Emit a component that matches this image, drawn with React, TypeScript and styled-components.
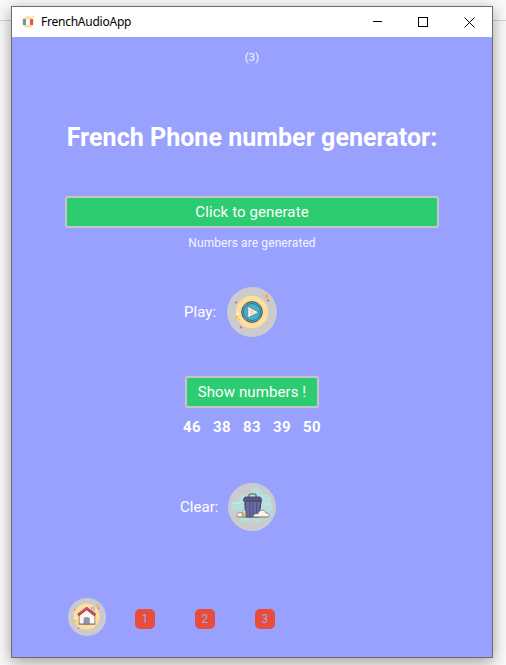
import React from 'react';
import styled, { createGlobalStyle } from 'styled-components';

const GlobalStyle = createGlobalStyle`
  * { box-sizing: border-box; }
  html, body { margin: 0; overflow: hidden; }
  button { margin: 0; padding: 0; font: inherit; color: inherit; border: 0; background: none; }
`;

const Desktop = styled.div`
  width: 506px;
  height: 665px;
  padding: 6px 0 0 11px;
  overflow: hidden;
  background: linear-gradient(#fafafa 0 20px, #d3d3d3 20px 21px, #fafafa 21px);
  font-family: Roboto, sans-serif;
`;

const AppWindow = styled.main`
  width: 482px;
  height: 652px;
  display: flex;
  flex-direction: column;
  border: 1px solid #6c6c70;
  background: #99a1ff;
  box-shadow: 0 4px 15px rgba(0, 0, 0, 0.38);
`;

const TitleBar = styled.header`
  height: 30px;
  flex: none;
  display: flex;
  align-items: center;
  background: #fff;
  color: #000;
`;

const AppIcon = styled.svg`
  width: 16px;
  height: 16px;
  margin-left: 8px;
`;

const AppName = styled.span`
  flex: 1;
  margin-left: 5px;
  font: 12px/16px "Noto Sans", sans-serif;
  letter-spacing: -0.24px;
`;

const WindowButton = styled.button`
  width: 46px;
  height: 30px;
  display: grid;
  place-items: center;
`;

const Content = styled.section`
  flex: 1;
  display: flex;
  flex-direction: column;
  align-items: center;
  color: #fff;
`;

const Caption = styled.div<{ $size: number; $top: number; $spacing?: number }>`
  height: 16px;
  margin-top: ${p => p.$top}px;
  font-size: ${p => p.$size}px;
  line-height: 16px;
  letter-spacing: ${p => p.$spacing ?? 0}px;
  color: #f4f5ff;
  white-space: nowrap;
`;

const Heading = styled.h1`
  height: 32px;
  margin: 56px 0 0;
  font-size: 25px;
  line-height: 32px;
  font-weight: 700;
  letter-spacing: 0.04px;
  white-space: nowrap;
`;

const ActionButton = styled.button<{ $width: number; $top: number }>`
  width: ${p => p.$width}px;
  height: 32px;
  margin-top: ${p => p.$top}px;
  border: 2px solid #c3c6c7;
  border-radius: 3px;
  background: #2ecc71;
  font-size: 15px;
  line-height: 28px;
  letter-spacing: 0.1px;
  white-space: nowrap;
`;

const ControlRow = styled.div<{ $top: number; $label: number; $shift: number; $size: number }>`
  height: ${p => p.$size}px;
  margin-top: ${p => p.$top}px;
  margin-left: ${p => p.$shift}px;
  display: grid;
  grid-template-columns: ${p => p.$label}px ${p => p.$size}px;
  align-items: center;
  font-size: 15px;
  letter-spacing: 0.05px;
`;

const RoundButton = styled.button<{ $size: number }>`
  width: ${p => p.$size}px;
  height: ${p => p.$size}px;
  border-radius: 50%;
  background: #cbcbcd;
  svg { display: block; width: 100%; height: 100%; }
`;

const Numbers = styled.div`
  width: 138px;
  height: 20px;
  margin-top: 9px;
  display: flex;
  justify-content: space-between;
  font-size: 15px;
  line-height: 20px;
  font-weight: 700;
  letter-spacing: 0.4px;
`;

const Footer = styled.nav`
  align-self: stretch;
  height: 38px;
  margin-top: 67px;
  padding-left: 56.4px;
  display: flex;
  align-items: center;
`;

const Pages = styled.div`
  display: flex;
  gap: 40px;
  margin: 4px 0 0 29.3px;
`;

const PageButton = styled.button`
  width: 20px;
  height: 20px;
  border-radius: 5px;
  background: #e74c3c;
  color: #b2a2df;
  font-size: 12px;
  line-height: 20px;
`;

const Confetti = () => (
  <>
    <circle cx="39.5" cy="9.5" r="1.8" fill="#f4b82b" />
    <circle cx="36.5" cy="8.5" r=".5" fill="#f4b82b" />
    <circle cx="9.5" cy="30.5" r="1.7" fill="#f6c447" />
    <circle cx="12.5" cy="32.5" r=".7" fill="#f4b82b" />
    <circle cx="38.8" cy="36.8" r=".9" fill="#efc05a" />
    <path d="M8 15l2 1M40 13l2 1M13 40l2 1" stroke="#dc6478" strokeWidth="1.5" />
    <circle cx="10.8" cy="26.7" r="1.2" fill="#fff3e3" />
  </>
);

const PlayPicture = () => (
  <svg viewBox="0 0 50 50">
    <circle cx="25" cy="25" r="16.2" fill="#ffdf9e" />
    <Confetti />
    <circle cx="25" cy="25" r="10.4" fill="#3fabc4" stroke="#5b565c" strokeWidth="1" />
    <circle cx="25" cy="25" r="8.5" fill="#3ab6d2" stroke="#426d7c" strokeWidth=".9" />
    <path d="M20.8 19.2v11.8l11-5.8Z" fill="#fff8ee" stroke="#756b70" strokeWidth=".8" strokeLinejoin="round" />
    <path d="M23.6 22.5v5.2l3.6-2.5Z" fill="#eee6dd" stroke="#aaa1a0" strokeWidth=".4" />
  </svg>
);

const TrashPicture = () => (
  <svg viewBox="0 0 48 48">
    <g fill="#b4dfdc">
      <circle cx="28" cy="12" r="7.2" />
      <circle cx="16" cy="16" r="5" />
      <circle cx="9" cy="23" r="5.5" />
      <circle cx="37" cy="17" r="6" />
      <circle cx="40" cy="24" r="4.8" />
      <circle cx="38" cy="31" r="5.5" />
      <circle cx="29" cy="33.5" r="6" />
      <circle cx="17" cy="34" r="5.5" />
      <path d="M12 15h27v18H12Z" />
    </g>
    <path d="M5 20.5h8M33 21h10" stroke="#d5edea" strokeWidth=".8" strokeDasharray="2 .7" />
    <path d="M9 33c0-4 3-4 5-3 1-4 7-4 8 0 4 0 4 4 2 4H9Z" fill="#fff3e5" stroke="#716169" strokeWidth=".6" />
    <path d="M21 14v-2q0-1 1-1h5q1 0 1 1v2" fill="none" stroke="#52475c" strokeWidth="1" />
    <path d="m17 18 1.5 16h12.5l2-16Z" fill="#696ba5" stroke="#494562" strokeWidth="1" />
    <path d="M21.5 19l.5 14M25 19v14M29 19l-.8 14" stroke="#45477a" strokeWidth=".8" />
    <path d="M17.5 14h14q2 0 2 4h-18q0-4 2-4Z" fill="#55578b" stroke="#494562" strokeWidth=".9" />
    <path d="M17 19v7M33 19l-1 7" stroke="#494562" strokeWidth=".9" />
    <path d="M25 34c0-3 3-4 5-3 1-5 7-5 8-1 4 0 4 4 2 4Z" fill="#fff3e5" stroke="#716169" strokeWidth=".7" />
    <path d="M14 30h4v3h-4Z" fill="#e8c969" stroke="#907b51" strokeWidth=".6" />
    <path d="M10 34h30" stroke="#826f6c" strokeWidth=".5" />
  </svg>
);

const HomePicture = () => (
  <svg viewBox="0 0 50 50">
    <circle cx="25" cy="25" r="17.5" fill="#ffdda0" />
    <Confetti />
    <path d="M31.5 19v-6h3.5v9" fill="#e2dad5" stroke="#9b8d90" strokeWidth=".9" />
    <path d="m15 22 10-8 11 9v12H15Z" fill="#fff7eb" stroke="#756b72" strokeWidth="1" />
    <path d="m13.5 23 11.5-9 11.5 9" fill="none" stroke="#70515c" strokeWidth="3.6" strokeLinejoin="round" />
    <path d="m13.5 22.3 11.5-9 11.5 9" fill="none" stroke="#df4658" strokeWidth="2.4" strokeLinejoin="round" />
    <path d="M21.5 35v-8q3.5-2 7 0v8Z" fill="#9097b3" stroke="#737b92" strokeWidth=".8" />
    <path d="M14 35h23" stroke="#7d7076" strokeWidth="1" />
  </svg>
);

export default function App() {
  return (
    <>
      <GlobalStyle />
      <Desktop>
        <AppWindow>
          <TitleBar>
            <AppIcon viewBox="0 0 16 16">
              <circle cx="8" cy="8" r="6" fill="#ffdf9f" />
              <path d="M3 5h3v6H3Z" fill="#6696c8" />
              <path d="M6 5h4v6H6Z" fill="#fff8f2" />
              <path d="M10 5h3v6h-3Z" fill="#e45361" />
              <path d="M12.5 3l1-1" stroke="#efc25d" strokeWidth="1.5" />
            </AppIcon>
            <AppName>FrenchAudioApp</AppName>
            <WindowButton aria-label="Minimize">
              <svg width="10" height="10" viewBox="-1 1 10 10" shapeRendering="crispEdges"><path d="M0 5.5h10" stroke="#000" overflow="visible" /></svg>
            </WindowButton>
            <WindowButton aria-label="Maximize">
              <svg width="10" height="10" shapeRendering="crispEdges"><path d="M.5.5h9v9h-9Z" fill="none" stroke="#000" /></svg>
            </WindowButton>
            <WindowButton aria-label="Close">
              <svg width="11" height="11"><path d="m.5.5 10 10M10.5.5l-10 10" stroke="#000" /></svg>
            </WindowButton>
          </TitleBar>
          <Content>
            <Caption $size={11} $top={13} $spacing={0.2}>(3)</Caption>
            <Heading>French Phone number generator:</Heading>
            <ActionButton $width={374} $top={42}>Click to generate</ActionButton>
            <Caption $size={12} $top={7} $spacing={0.1}>Numbers are generated</Caption>
            <ControlRow $top={36} $label={43} $shift={-43} $size={50}>
              <span>Play:</span>
              <RoundButton $size={50} aria-label="Play"><PlayPicture /></RoundButton>
            </ControlRow>
            <ActionButton $width={134} $top={39}>Show numbers !</ActionButton>
            <Numbers>
              {[46, 38, 83, 39, 50].map(n => <span key={n}>{n}</span>)}
            </Numbers>
            <ControlRow $top={46} $label={48} $shift={-48} $size={48}>
              <span>Clear:</span>
              <RoundButton $size={48} aria-label="Clear"><TrashPicture /></RoundButton>
            </ControlRow>
            <Footer>
              <RoundButton $size={37.3} aria-label="Home"><HomePicture /></RoundButton>
              <Pages>
                {[1, 2, 3].map(n => <PageButton key={n}>{n}</PageButton>)}
              </Pages>
            </Footer>
          </Content>
        </AppWindow>
      </Desktop>
    </>
  );
}
